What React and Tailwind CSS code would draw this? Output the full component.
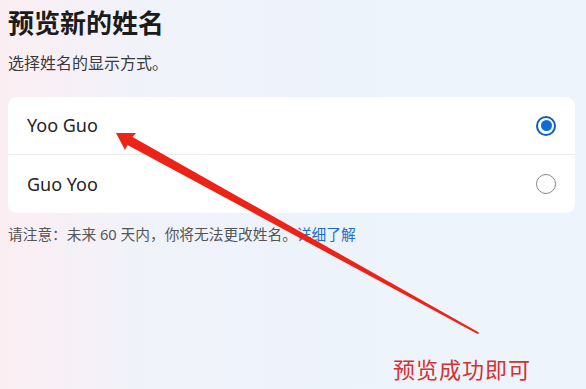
import React from "react";

function Radio({ checked }) {
  if (checked) {
    return (
      <div className="w-[20px] h-[20px] rounded-full border-[2px] border-[#0f5fb8] flex items-center justify-center bg-white">
        <div className="w-[11px] h-[11px] rounded-full bg-[#0f6cd6]" />
      </div>
    );
  }
  return <div className="w-[20px] h-[20px] rounded-full border-[1.5px] border-[#8a8a8a] bg-white" />;
}

export default function App() {
  const font = { fontFamily: '"Noto Sans", "Noto Sans CJK SC", sans-serif' };
  return (
    <div
      className="relative w-[586px] h-[389px] overflow-hidden bg-[linear-gradient(90deg,#fbeef2_0%,#f1f2f9_22%,#edf3fb_55%,#edf4fc_100%)]"
      style={font}
    >
      <div className="flex flex-col px-[8px] pt-[6px]">
        <h1 className="text-[26px] leading-[34px] font-bold text-[#1b1b1b]">预览新的姓名</h1>
        <p className="mt-[12px] text-[16px] leading-[22px] text-[#3a3a3a]">选择姓名的显示方式。</p>
        <div className="mt-[23px] w-[567px] rounded-[9px] bg-white flex flex-col">
          <div className="h-[58px] flex items-center justify-between pl-[19px] pr-[19px] border-b border-[#ececec]">
            <span className="text-[18px] text-[#242424]">Yoo Guo</span>
            <Radio checked />
          </div>
          <div className="h-[58px] flex items-center justify-between pl-[19px] pr-[19px]">
            <span className="text-[18px] text-[#242424]">Guo Yoo</span>
            <Radio />
          </div>
        </div>
        <p className="mt-[11px] text-[14.7px] leading-[20px] text-[#555555]">
          请注意：未来 60 天内，你将无法更改姓名。<span className="text-[#1a6fc9]">详细了解</span>
        </p>
      </div>

      <svg className="absolute left-0 top-0 pointer-events-none" width="586" height="389" viewBox="0 0 586 389">
        <polygon
          points="116,133 136,133 132.5,137 478.5,332.2 478.8,333.6 477.6,334 127.5,145 125,150"
          fill="#ec2418"
        />
      </svg>

      <div className="absolute left-[393px] top-[354px] text-[22px] leading-[30px] tracking-[1px] text-[#d63030]">
        预览成功即可
      </div>
    </div>
  );
}
